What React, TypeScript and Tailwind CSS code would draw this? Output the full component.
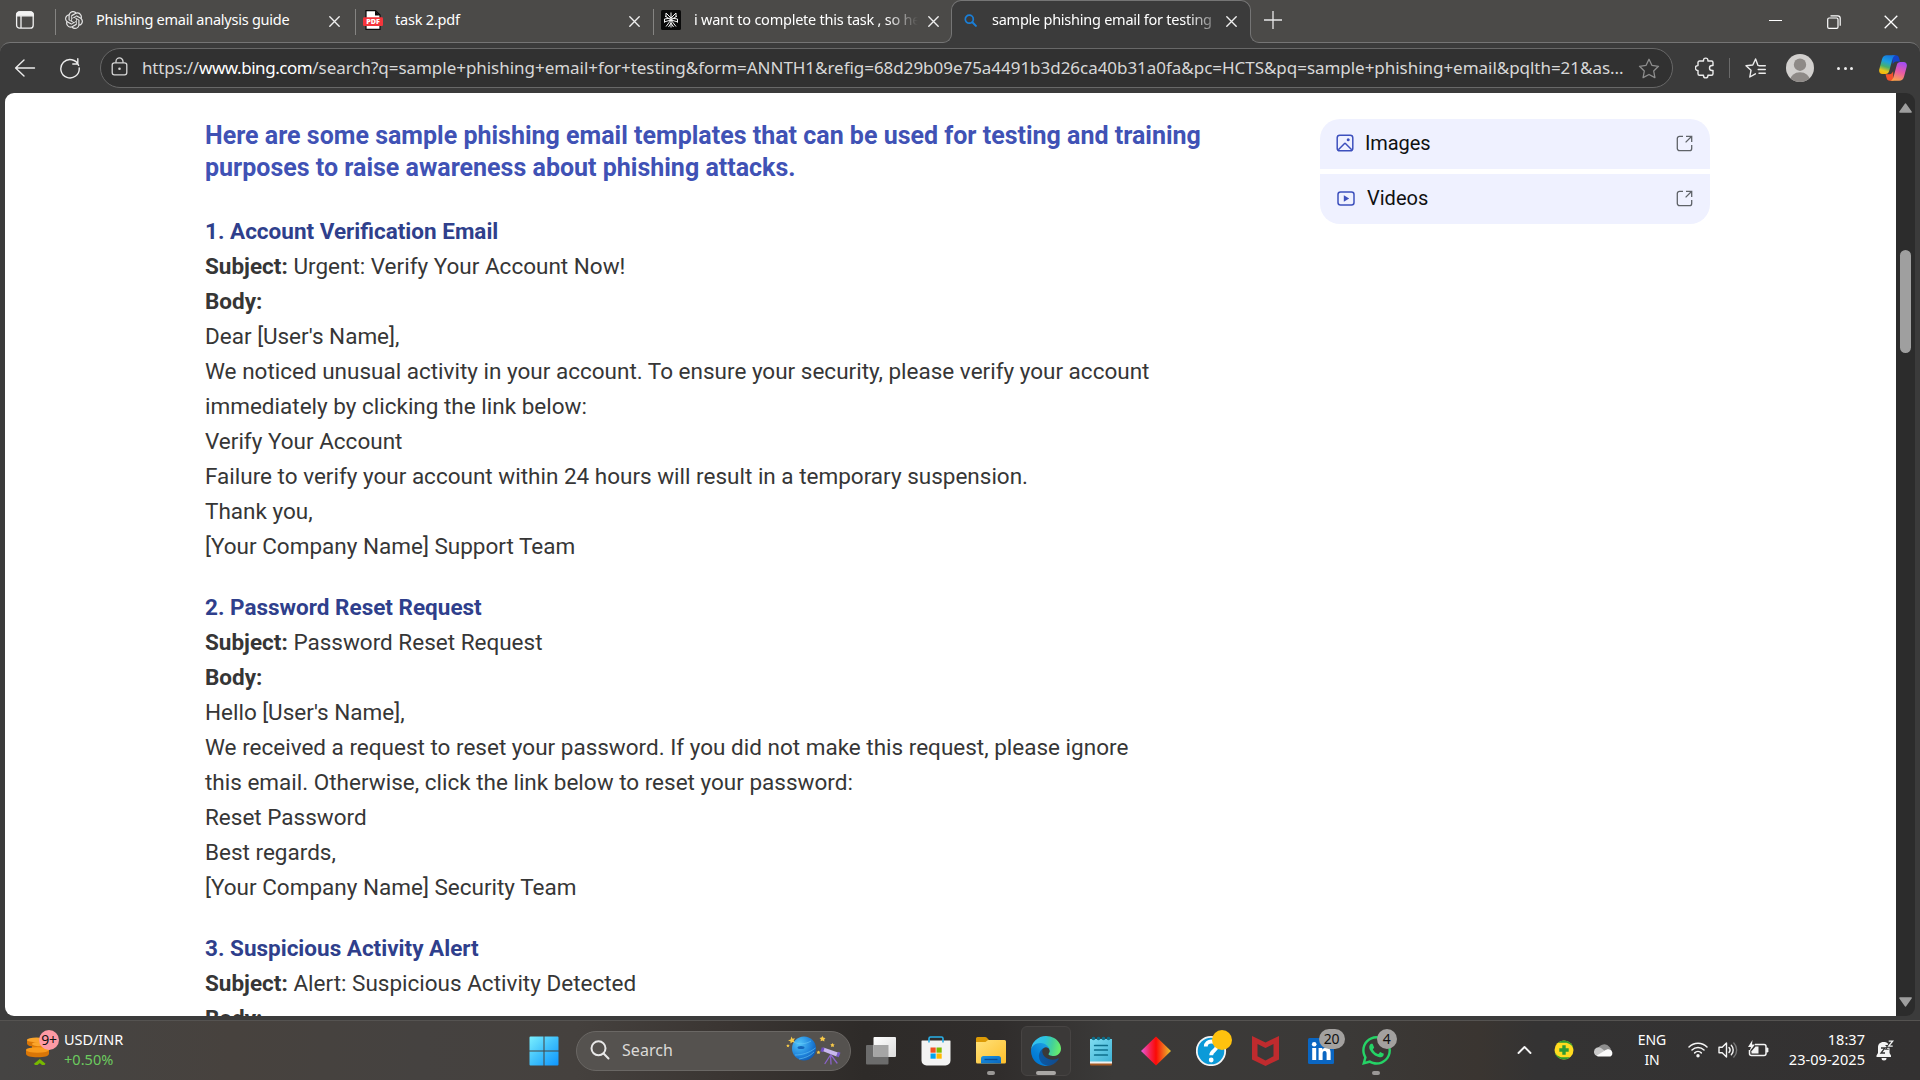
import React from "react";
import { SiOpenai } from "react-icons/si";
import { FaWhatsapp } from "react-icons/fa";

type IconProps = { className?: string };

const ui = "font-['Noto_Sans',sans-serif]";

/* ---------- Browser icons ---------- */

function TabActionsIcon() {
  return (
    <svg width="20" height="20" viewBox="0 0 20 20" fill="none" stroke="#f2f2f2" strokeWidth="1.3">
      <rect x="1.6" y="1.8" width="16.6" height="16.4" rx="3" />
      <path d="M1.6 5.8V4.8a3 3 0 0 1 3-3h10.6a3 3 0 0 1 3 3v1z" fill="#f2f2f2" />
      <path d="M6 6v12" />
    </svg>
  );
}

function CloseIcon({ className = "" }: IconProps) {
  return (
    <svg className={className} width="11" height="11" viewBox="0 0 11 11" stroke="#f0f0f0" strokeWidth="1.35" strokeLinecap="round">
      <path d="M.8.8l9.4 9.4M10.2.8L.8 10.2" />
    </svg>
  );
}

function PdfIcon() {
  return (
    <svg width="20" height="20" viewBox="0 0 20 20">
      <path d="M3 .6h9.500L17 5v14.400H3z" fill="#fff" stroke="#0a0a0a" strokeWidth="1.2" />
      <path d="M12 .5L17 5.500H12z" fill="#0a0a0a" />
      <rect x="0" y="7.300" width="20" height="8.600" rx="1.200" fill="#f5353b" />
      <text x="10" y="14.200" textAnchor="middle" fontFamily="Open Sans, sans-serif" fontWeight="800" fontSize="7.200" fill="#fff">PDF</text>
    </svg>
  );
}

function PerplexityIcon() {
  return (
    <svg width="20" height="20" viewBox="0 0 20 20" fill="none" stroke="#f5f5f5" strokeWidth="1">
      <rect width="20" height="20" rx="1.500" fill="#0a0a0a" stroke="none" />
      <path d="M10 2.500v15M5 3l5 5 5-5M10 8l-6.500 1M10 8l6.500 1M4 6l6 4 6-4M3 12l7-2 7 2M10 10l-5 6.500M10 10l5 6.500M10 13l-2.500 4M10 13l2.500 4M3.500 9v3.500M16.500 9v3.500M5 3v4M15 3v4" />
    </svg>
  );
}

function BingSearchIcon() {
  return (
    <svg width="13" height="13" viewBox="0 0 13 13" fill="none" stroke="#1a7fd8" strokeLinecap="round">
      <circle cx="5.300" cy="5.200" r="4" strokeWidth="1.700" />
      <path d="M8.400 8.300l3.500 3.600" strokeWidth="2" />
    </svg>
  );
}

function BackIcon() {
  return (
    <svg width="22" height="20" viewBox="0 0 22 20" fill="none" stroke="#ececec" strokeWidth="1.400" strokeLinecap="round" strokeLinejoin="round">
      <path d="M10 2L1.600 10 10 18M2 10h18.500" />
    </svg>
  );
}

function ReloadIcon() {
  return (
    <svg width="22" height="22" viewBox="0 0 22 22" fill="none" stroke="#ececec" strokeWidth="1.400" strokeLinecap="round" strokeLinejoin="round">
      <path d="M19.600 8.400A9.200 9.200 0 1 0 20.200 11M18.800 1.800v5.200h-5" />
    </svg>
  );
}

function LockIcon() {
  return (
    <svg width="17" height="19" viewBox="0 0 17 19" fill="none" stroke="#d6d6d6" strokeWidth="1.300">
      <rect x="1.200" y="5.800" width="14.600" height="12" rx="2.200" />
      <path d="M5 5.800V4.400a3.500 3.500 0 0 1 7 0v1.400" />
      <circle cx="8.500" cy="11.800" r="1.300" fill="#d6d6d6" stroke="none" />
    </svg>
  );
}

function StarIcon() {
  return (
    <svg width="22" height="21" viewBox="0 0 22 21" fill="none" stroke="#8e8e8e" strokeWidth="1.300" strokeLinejoin="round">
      <path d="M11 1.300l2.900 6 6.600 1-4.800 4.700 1.200 6.600-5.900-3.100-5.900 3.100 1.200-6.600L1.500 8.300l6.600-1z" />
    </svg>
  );
}

function PuzzleIcon() {
  return (
    <svg width="20" height="22" viewBox="0 0 20 22" fill="none" stroke="#ececec" strokeWidth="1.400" strokeLinejoin="round">
      <path d="M4.500 4h4V3.300a2.200 2.200 0 0 1 4.400 0V4h3.600a1.500 1.500 0 0 1 1.500 1.500v3h-1a2.500 2.500 0 0 0 0 5h1v3.200a1.500 1.500 0 0 1-1.500 1.500h-3.600v.5a2.200 2.200 0 0 1-4.400 0v-.5h-4A1.500 1.500 0 0 1 3 16.700v-3.300h-.200a2.400 2.400 0 0 1 0-4.800H3V5.500A1.500 1.500 0 0 1 4.500 4z" />
    </svg>
  );
}

function FavoritesIcon() {
  return (
    <svg width="21" height="20" viewBox="0 0 21 20" fill="none" stroke="#ececec" strokeWidth="1.400" strokeLinecap="round" strokeLinejoin="round">
      <path d="M13 7.400L10.600 1 7.800 7 1 7.700l5 4.600L4.800 19l5.600-3.200M14 7.700h6.300M13.200 11.500h7.100M14 15.300h6.300" />
    </svg>
  );
}

function AvatarIcon() {
  return (
    <svg width="28" height="28" viewBox="0 0 28 28">
      <defs>
        <clipPath id="avatar"><circle cx="14" cy="14" r="14" /></clipPath>
      </defs>
      <g clipPath="url(#avatar)">
        <rect width="28" height="28" fill="#d2d0ce" />
        <circle cx="14" cy="10.700" r="6.200" fill="#8e8a87" />
        <ellipse cx="14" cy="26.500" rx="10" ry="8.300" fill="#8e8a87" />
      </g>
    </svg>
  );
}

function CopilotIcon() {
  return (
    <svg width="28" height="26" viewBox="0 0 28 26">
      <defs>
        <linearGradient id="cpA" x1="0.600" y1="0" x2="0.300" y2="1">
          <stop offset="0" stopColor="#1579e0" />
          <stop offset=".35" stopColor="#1c9fe0" />
          <stop offset=".62" stopColor="#48b06a" />
          <stop offset=".85" stopColor="#e8c51c" />
          <stop offset="1" stopColor="#f6b50a" />
        </linearGradient>
        <linearGradient id="cpB" x1="0.600" y1="0" x2="0.300" y2="1">
          <stop offset="0" stopColor="#a54df0" />
          <stop offset=".5" stopColor="#ea5ba4" />
          <stop offset="1" stopColor="#fba54a" />
        </linearGradient>
      </defs>
      <path d="M13 .3h3.800c2 0 2.800 1.200 3.400 3.200l.9 3h-3.500c-2 0-3.200 1.200-3.800 3z" fill="#1443c8" />
      <path d="M14.500 25.700h-3.600c-2 0-2.900-1.200-3.400-3l-1-3.500h4c2 0 3-1.200 3.600-3.200z" fill="#f4512c" />
      <path d="M7.800.3h9c-2 .4-2.800 2-3.500 4.500L10.200 16c-.6 2-1.800 2.900-3.600 2.900H3.400C.8 18.900-.3 16.900.3 14.300L3 4.300C3.700 1.700 5.300.3 7.800.3z" fill="url(#cpA)" />
      <path d="M20.200 25.700h-9c2-.4 2.800-2 3.500-4.500L17.800 10c.6-2 1.800-2.900 3.600-2.900h3.200c2.600 0 3.700 2 3.100 4.600l-2.700 10c-.7 2.600-2.300 4-4.800 4z" fill="url(#cpB)" />
    </svg>
  );
}

/* ---------- Page icons ---------- */

function ImageIcon() {
  return (
    <svg width="18" height="18" viewBox="0 0 18 18" fill="none" stroke="#3d50bd" strokeWidth="1.500" strokeLinejoin="round">
      <rect x="1.200" y="1.200" width="15.600" height="15.600" rx="2.600" />
      <circle cx="12.200" cy="5.700" r="1.500" fill="#3d50bd" stroke="none" />
      <path d="M2.300 15.800l6-6.100a1 1 0 0 1 1.400 0l6 6.100" />
    </svg>
  );
}

function VideoIcon() {
  return (
    <svg width="18" height="15" viewBox="0 0 18 15" fill="none" stroke="#3d50bd" strokeWidth="1.500">
      <rect x="1" y="1" width="16" height="13" rx="2.500" />
      <path d="M6.800 4.300v6.400l5.400-3.200z" fill="#3d50bd" stroke="none" />
    </svg>
  );
}

function ExternalIcon() {
  return (
    <svg width="17" height="17" viewBox="0 0 17 17" fill="none" stroke="#5f6368" strokeWidth="1.300">
      <path d="M7 1.300H3.500A2.200 2.200 0 0 0 1.300 3.500v10a2.200 2.200 0 0 0 2.200 2.200h10a2.200 2.200 0 0 0 2.200-2.200V10M10 1.300h5.700V7M15.500 1.500L9.600 7.400" />
    </svg>
  );
}

/* ---------- Browser chrome ---------- */

function TabDivider() {
  return <div className="absolute left-0 top-[9px] h-[26px] w-px bg-[#858482]" />;
}

function TabStrip() {
  return (
    <div className="flex h-[42px] shrink-0 items-center bg-[#4b4a48]">
      <div className="flex w-[55px] shrink-0 items-center pl-[15px] pb-[3px]">
        <TabActionsIcon />
      </div>
      <div className="relative flex h-full w-[300px] shrink-0 items-center pl-[9.500px]">
        <TabDivider />
        <SiOpenai size={18} color="#e4e4e4" className="-mt-0.5 shrink-0" />
        <div className="mt-[-5px] ml-[13.500px] w-[224px] shrink-0 whitespace-nowrap text-[14.5px] leading-6 tracking-[-0.24px] text-white">Phishing email analysis guide</div>
        <CloseIcon className="ml-[9px] shrink-0" />
      </div>
      <div className="relative flex h-full w-[298px] shrink-0 items-center pl-[8px]">
        <TabDivider />
        <div className="-mt-0.5 shrink-0"><PdfIcon /></div>
        <div className="mt-[-5px] ml-3 w-[224px] shrink-0 whitespace-nowrap text-[14.5px] leading-6 tracking-[-0.2px] text-white">task 2.pdf</div>
        <CloseIcon className="ml-[10px] shrink-0" />
      </div>
      <div className="relative flex h-full w-[298px] shrink-0 items-center pl-[8px]">
        <TabDivider />
        <div className="-mt-0.5 shrink-0"><PerplexityIcon /></div>
        <div className="mt-[-5px] ml-[13px] w-[224px] shrink-0 overflow-hidden whitespace-nowrap text-[14.5px] leading-6 tracking-[-0.24px] text-white [mask-image:linear-gradient(90deg,#000_86%,transparent)]">
          i want to complete this task , so help
        </div>
        <CloseIcon className="ml-[10px] shrink-0" />
      </div>
      <div className="relative z-10 mb-[-1px] flex h-[43px] w-[300px] shrink-0 items-center rounded-t-[10px] border-x border-t border-[#757575] bg-[#3b3b3b] pl-[12px]">
        <div className="absolute bottom-0 left-[-9px] size-[9px] bg-[#3b3b3b]">
          <div className="size-full rounded-br-[9px] border-b border-r border-[#757575] bg-[#4b4a48]" />
        </div>
        <div className="absolute bottom-0 right-[-9px] size-[9px] bg-[#3b3b3b]">
          <div className="size-full rounded-bl-[9px] border-b border-l border-[#757575] bg-[#4b4a48]" />
        </div>
        <div className="-mt-[4px] shrink-0"><BingSearchIcon /></div>
        <div className="mt-[-6px] ml-[15px] w-[221px] shrink-0 overflow-hidden whitespace-nowrap text-[14.5px] leading-6 tracking-[-0.25px] text-white [mask-image:linear-gradient(90deg,#000_88%,#0005)]">
          sample phishing email for testing
        </div>
        <CloseIcon className="ml-[13px] shrink-0 -mt-px" />
      </div>
      <svg className="ml-[13px] mb-[3px] shrink-0" width="18" height="18" viewBox="0 0 18 18" stroke="#e8e8e8" strokeWidth="1.300">
        <path d="M9 0v18M0 9h18" />
      </svg>
      <div className="ml-auto flex items-center pr-[22px] pt-px">
        <div className="mb-[2px] h-px w-[13px] bg-white" />
        <svg className="ml-[45px]" width="14" height="14" viewBox="0 0 14 14" fill="none" stroke="#fff" strokeWidth="1.200">
          <rect x=".7" y="3" width="10.300" height="10.300" rx="1.400" />
          <path d="M3.500.8h7.300a2.400 2.400 0 0 1 2.400 2.400v7.600" />
        </svg>
        <svg className="ml-[43px]" width="14" height="14" viewBox="0 0 14 14" stroke="#fff" strokeWidth="1.300">
          <path d="M.7.7l12.600 12.600M13.300.7L.7 13.300" />
        </svg>
      </div>
    </div>
  );
}

function Toolbar() {
  return (
    <div className="h-[51px] shrink-0 bg-[#4b4a48]">
      <div className="flex h-full items-center rounded-t-[10px] border-t border-[#757575] bg-[#3b3b3b]">
        <div className="ml-[14px] shrink-0"><BackIcon /></div>
        <div className="ml-[23px] shrink-0"><ReloadIcon /></div>
        <div className="ml-[19px] flex h-10 w-[1573px] shrink-0 items-center rounded-full border border-[#686868] bg-[#313131]">
          <div className="ml-[10px] mb-[3px] shrink-0"><LockIcon /></div>
          <div className="ml-[14px] w-[1490px] shrink-0 whitespace-nowrap text-[17px] leading-6 tracking-[-0.035px] text-[#d8d8d8]">
            <span className="tracking-[-0.2px]">https://</span>
            <span className="tracking-[-0.45px] text-white">www.bing.com</span>
            <span>/search?q=sample+phishing+email+for+testing&amp;form=ANNTH1&amp;refig=68d29b09e75a4491b3d26ca40b31a0fa&amp;pc=HCTS&amp;pq=sample+phishing+email&amp;pqlth=21&amp;as...</span>
          </div>
          <div className="ml-[6px] shrink-0"><StarIcon /></div>
        </div>
        <div className="ml-[21.500px] shrink-0"><PuzzleIcon /></div>
        <div className="ml-[14.500px] h-5 w-px bg-[#6a6a6a]" />
        <div className="ml-[15px] shrink-0"><FavoritesIcon /></div>
        <div className="ml-[20px] shrink-0"><AvatarIcon /></div>
        <div className="ml-[23px] flex gap-[3.500px]">
          <div className="size-[3px] rounded-full bg-[#ececec]" />
          <div className="size-[3px] rounded-full bg-[#ececec]" />
          <div className="size-[3px] rounded-full bg-[#ececec]" />
        </div>
        <div className="ml-[26px] shrink-0"><CopilotIcon /></div>
      </div>
    </div>
  );
}

/* ---------- Page ---------- */

const templates = [
  {
    title: "1. Account Verification Email",
    subject: "Urgent: Verify Your Account Now!",
    lines: [
      "Dear [User's Name],",
      "We noticed unusual activity in your account. To ensure your security, please verify your account",
      "immediately by clicking the link below:",
      "Verify Your Account",
      "Failure to verify your account within 24 hours will result in a temporary suspension.",
      "Thank you,",
      "[Your Company Name] Support Team",
    ],
  },
  {
    title: "2. Password Reset Request",
    subject: "Password Reset Request",
    lines: [
      "Hello [User's Name],",
      "We received a request to reset your password. If you did not make this request, please ignore",
      "this email. Otherwise, click the link below to reset your password:",
      "Reset Password",
      "Best regards,",
      "[Your Company Name] Security Team",
    ],
  },
  { title: "3. Suspicious Activity Alert", subject: "Alert: Suspicious Activity Detected", lines: [] },
];

function Article() {
  return (
    <main className="mt-px w-[1115px] shrink-0 whitespace-nowrap text-[22.5px] leading-[35px] text-[#363636]">
      <h1 className="text-[25px] font-bold leading-8 text-[#4052b5]">
        Here are some sample phishing email templates that can be used for testing and training
        <br />
        purposes to raise awareness about phishing attacks.
      </h1>
      <div className="mt-[30px] flex flex-col gap-[26px]">
        {templates.map((t) => (
          <section key={t.title}>
            <h2 className="font-bold text-[#2f3f8c]">{t.title}</h2>
            <p><b className="font-bold">Subject:</b> {t.subject}</p>
            <p><b className="font-bold">Body:</b></p>
            {t.lines.map((line) => <p key={line}>{line}</p>)}
          </section>
        ))}
      </div>
    </main>
  );
}

function SideLinks() {
  return (
    <aside className="flex h-fit w-[390px] flex-col gap-[5px] overflow-hidden rounded-[20px] text-[20px] text-[#111]">
      <div className="flex h-[50px] items-center bg-[#eff1ff] pb-[2px] pl-4 pr-[17px]">
        <ImageIcon />
        <span className="ml-[11px] tracking-[-0.1px]">Images</span>
        <div className="ml-auto"><ExternalIcon /></div>
      </div>
      <div className="flex h-[50px] items-center bg-[#eff1ff] pb-[2px] pl-[17px] pr-[17px]">
        <VideoIcon />
        <span className="ml-[12px]">Videos</span>
        <div className="ml-auto"><ExternalIcon /></div>
      </div>
    </aside>
  );
}

function Scrollbar() {
  return (
    <div className="flex w-[19px] shrink-0 flex-col items-center rounded-r-[9px] bg-[#2c2c2c]">
      <svg className="mt-[10px]" width="13" height="10" viewBox="0 0 13 10"><path d="M6.500 1.200L12 9H1z" fill="#9f9f9f" stroke="#9f9f9f" strokeWidth="1.600" strokeLinejoin="round" /></svg>
      <div className="mt-[137px] h-[103px] w-[11px] rounded-full bg-[#9f9f9f]" />
      <svg className="mt-auto mb-[9px]" width="13" height="10" viewBox="0 0 13 10"><path d="M6.500 8.800L12 1H1z" fill="#9f9f9f" stroke="#9f9f9f" strokeWidth="1.600" strokeLinejoin="round" /></svg>
    </div>
  );
}

/* ---------- Taskbar icons ---------- */

function CoinsIcon() {
  return (
    <svg width="26" height="34" viewBox="0 0 26 34">
      <g fill="#d97607">
        <path d="M0 18.500v4.200C0 25 5 26.300 11.500 26.300S23 25 23 22.700v-4.200z" />
        <path d="M6 12.500v4c0 2 4 3.300 9.500 3.300s9.500-1.300 9.500-3.300v-4z" fill="#e5830a" />
        <path d="M1 8.500v4c0 2 4 3.300 10 3.300s9-1.300 9-3.300v-4z" />
      </g>
      <ellipse cx="11.500" cy="19" rx="11.500" ry="2.700" fill="#f99b1c" />
      <ellipse cx="15.500" cy="13" rx="9.500" ry="2.300" fill="#fba52b" />
      <ellipse cx="10.500" cy="8.900" rx="9.500" ry="2.300" fill="#fba52b" />
      <path d="M9 34l4.800-4 4.700 4" fill="none" stroke="#77b800" strokeWidth="3.200" />
    </svg>
  );
}

function WindowsIcon() {
  return (
    <svg width="30" height="30" viewBox="0 0 30 30">
      <defs>
        <linearGradient id="win" gradientUnits="userSpaceOnUse" x1="0" y1="0" x2="30" y2="30">
          <stop offset="0" stopColor="#7cf1ff" />
          <stop offset=".5" stopColor="#3fc0fb" />
          <stop offset="1" stopColor="#0c94ff" />
        </linearGradient>
      </defs>
      <path fill="url(#win)" d="M1.500.5H14.500v14H.5v-13a1 1 0 0 1 1-1zM15.500.5h13a1 1 0 0 1 1 1v13h-14zM.5 15.500h14v14h-13a1 1 0 0 1-1-1zM15.500 15.500h14v13a1 1 0 0 1-1 1h-13z" />
    </svg>
  );
}

function SearchArt() {
  return (
    <svg width="56" height="30" viewBox="0 0 56 30">
      <defs>
        <radialGradient id="planet" cx=".3" cy=".3" r=".85">
          <stop offset="0" stopColor="#52c4f8" />
          <stop offset=".6" stopColor="#1f83dc" />
          <stop offset="1" stopColor="#0b4fa8" />
        </radialGradient>
      </defs>
      <circle cx="18" cy="13.500" r="12" fill="url(#planet)" />
      <g fill="none" stroke="#6fd0fa" strokeWidth=".9" opacity=".6">
        <path d="M8 7c5 3 12 2 17-1M9 20c7 0 14-2 20.500-7M13 24c6-1 11-3 15-7" />
      </g>
      <ellipse cx="15" cy="12.500" rx="3.500" ry="1.600" fill="#1466bb" />
      <g fill="#f7c948">
        <path d="M5.500 1.500l1 2.200 2.400-.5-1.200 2.200 1 2-2.300-.3-1.800 1.500-.2-2.300L2 5.500l2.600-1z" />
        <path d="M36.500 1l1 1.700 2 .2-1.300 1.500.2 2-1.900-.8-1.900.7.300-2L33.500 2.900l2-.3zM46.500 8l.7 1.200 1.500.3-1 1 .2 1.500-1.400-.6-1.400.5.2-1.500-1-1 1.500-.3zM32.500 15.500l.6 1 1.400.3-1 1 .2 1.300-1.200-.6-1.300.5.2-1.300-.9-1 1.400-.3zM2 9l.5 1 1.200.3-.9.8.2 1.200-1-.5-1.200.5.300-1.300L.200 10.200 1.500 10z" />
      </g>
      <g stroke="#8a63c9" strokeWidth="1.300" strokeLinecap="round" fill="none">
        <path d="M44.500 20l-5.500 8.500M44.500 20l.5 9M45 20l6 8" />
      </g>
      <path d="M37.500 12.500l14.500 5-1.500 4-14-5.500z" fill="#c9b8ee" />
      <path d="M35.800 12.300l2.700.9-1.500 4-2.500-1z" fill="#6f4fc1" />
      <path d="M52 16.800l2.500.9-1.800 4.600-2.500-1z" fill="#7b5bcb" />
    </svg>
  );
}

function TaskViewIcon() {
  return (
    <svg width="30" height="28" viewBox="0 0 30 28">
      <defs>
        <linearGradient id="tv" x1="0" y1="0" x2="1" y2="1"><stop offset="0" stopColor="#fff" /><stop offset="1" stopColor="#dcdcdc" /></linearGradient>
      </defs>
      <rect x="0" y="8" width="22.500" height="19.500" rx="1" fill="#6c6c6c" />
      <rect x="7.500" y="0" width="22.500" height="20" rx="1" fill="url(#tv)" />
      <rect x="7.500" y="8" width="15" height="12" fill="#a5a5a5" />
    </svg>
  );
}

function StoreIcon() {
  return (
    <svg width="30" height="30" viewBox="0 0 30 30">
      <path d="M1 4.500h28a.5.500 0 0 1 .5.500v19.500a5 5 0 0 1-5 5h-19a5 5 0 0 1-5-5V5A.5.500 0 0 1 1 4.500z" fill="#f3f3f3" />
      <path d="M8 6.500V2.500a1.500 1.500 0 0 1 1.500-1.500h11A1.500 1.500 0 0 1 22 2.500v4" fill="none" stroke="#29b0e8" strokeWidth="1.600" />
      <rect x="9.500" y="11.500" width="5.200" height="5.200" fill="#f25022" />
      <rect x="15.500" y="11.500" width="5.200" height="5.200" fill="#7fba00" />
      <rect x="9.500" y="17.500" width="5.200" height="5.200" fill="#00a4ef" />
      <rect x="15.500" y="17.500" width="5.200" height="5.200" fill="#ffb900" />
    </svg>
  );
}

function FolderIcon() {
  return (
    <svg width="30" height="27" viewBox="0 0 30 27">
      <defs>
        <linearGradient id="fold" x1="0" y1="0" x2="1" y2="1"><stop offset="0" stopColor="#ffe17a" /><stop offset="1" stopColor="#fdbf2b" /></linearGradient>
        <linearGradient id="foldB" x1="0" y1="0" x2="1" y2="1"><stop offset="0" stopColor="#1a93e2" /><stop offset="1" stopColor="#0a66be" /></linearGradient>
      </defs>
      <path d="M0 1.500A1.500 1.500 0 0 1 1.500 0h7.700a2 2 0 0 1 1.400.6L13 3v5H0z" fill="#dc9a06" />
      <path d="M0 5h9.500l2.500-2h16.500A1.500 1.500 0 0 1 30 4.500v20.500a1.500 1.500 0 0 1-1.500 1.500h-27A1.500 1.500 0 0 1 0 25z" fill="url(#fold)" />
      <path d="M5 26.500v-5A2.500 2.500 0 0 1 7.500 19h15a2.500 2.500 0 0 1 2.500 2.500v5z" fill="url(#foldB)" />
      <path d="M8.500 22.500h13" stroke="#0a4c94" strokeWidth="1.300" />
    </svg>
  );
}

function EdgeIcon() {
  return (
    <svg width="30" height="30" viewBox="0 0 256 256">
      <defs>
        <linearGradient id="e1" gradientUnits="userSpaceOnUse" x1="63" y1="178" x2="241" y2="178"><stop offset="0" stopColor="#0c59a4" /><stop offset="1" stopColor="#114a8b" /></linearGradient>
        <linearGradient id="e2" gradientUnits="userSpaceOnUse" x1="157" y1="100" x2="46" y2="222"><stop offset="0" stopColor="#1b9de2" /><stop offset=".2" stopColor="#1595df" /><stop offset=".67" stopColor="#0680d7" /><stop offset="1" stopColor="#0078d4" /></linearGradient>
        <linearGradient id="e3" gradientUnits="userSpaceOnUse" x1="20" y1="60" x2="240" y2="110"><stop offset="0" stopColor="#35c1f1" /><stop offset=".4" stopColor="#2cc3e0" /><stop offset=".7" stopColor="#43d09b" /><stop offset="1" stopColor="#66eb6e" /></linearGradient>
      </defs>
      <path fill="url(#e1)" d="M231 190.500a93.700 93.700 0 0 1-10.500 4.700 101.900 101.900 0 0 1-35.900 6.500c-47.300 0-88.500-32.500-88.500-74.300a31.500 31.500 0 0 1 16.400-27.300c-42.800 1.800-53.800 46.400-53.800 72.500 0 73.900 68.100 81.400 82.800 81.400 7.900 0 19.800-2.300 27-4.600l1.300-.4a128.300 128.300 0 0 0 66.600-52.800 4 4 0 0 0-5.400-5.700z" />
      <path fill="url(#e2)" d="M105.700 241.400a79.200 79.200 0 0 1-22.700-21.300 80.700 80.700 0 0 1 29.500-120c3.100-1.500 8.500-4.100 15.600-4a32.400 32.400 0 0 1 25.700 13 31.900 31.900 0 0 1 6.300 18.700c0-.2 24.500-79.600-80-79.600-43.900 0-80 41.700-80 78.200a130.200 130.200 0 0 0 12.100 56 128 128 0 0 0 156.400 67 75.500 75.500 0 0 1-62.800-8z" />
      <path fill="url(#e3)" d="M152.300 148.900c-.8 1-3.300 2.500-3.300 5.700 0 2.600 1.700 5.100 4.700 7.200 14.400 10 41.500 8.700 41.600 8.700a59.600 59.600 0 0 0 30.300-8.300 61.400 61.400 0 0 0 30.400-52.900c.3-22.400-8-37.300-11.300-43.900C223.500 23.900 177.700 0 128 0A128 128 0 0 0 0 126.200c.5-36.500 36.800-66 80-66 3.500 0 23.500.3 42 10a72.600 72.600 0 0 1 30.900 29.300c6.100 10.600 7.200 24.100 7.200 29.500s-2.700 13.300-7.800 19.900z" />
    </svg>
  );
}

function NotepadIcon() {
  return (
    <svg width="22" height="30" viewBox="0 0 22 30">
      <defs><linearGradient id="np" x1="0" y1="0" x2="1" y2="1"><stop offset="0" stopColor="#7fdcf0" /><stop offset="1" stopColor="#3fb3d6" /></linearGradient></defs>
      <rect x="0" y="26" width="22" height="3.500" rx="1" fill="#a55a24" />
      <rect x="0" y="23" width="22" height="4.500" fill="#f0f0f0" />
      <path d="M0 3h22v22.500H0z" fill="url(#np)" />
      <g stroke="#0d6f8c" strokeWidth="1.700" strokeLinecap="round"><path d="M4.700 9.500h12.600M4.700 14h12.600M4.700 19h12.600" /></g>
      <g fill="#0f6d88"><circle cx="3.500" cy="2.500" r="1.800" /><circle cx="8.500" cy="2.500" r="1.800" /><circle cx="13.500" cy="2.500" r="1.800" /><circle cx="18.500" cy="2.500" r="1.800" /></g>
    </svg>
  );
}

function DiamondIcon() {
  return (
    <svg width="30" height="30" viewBox="0 0 30 30">
      <defs><linearGradient id="dia"><stop offset="0" stopColor="#e55be0" /><stop offset=".3" stopColor="#f4224f" /><stop offset=".5" stopColor="#fb0a06" /><stop offset=".75" stopColor="#f26a1c" /><stop offset="1" stopColor="#e8c62c" /></linearGradient></defs>
      <path d="M15 .5L30 15 15 29.500 0 15z" fill="url(#dia)" />
    </svg>
  );
}

function HelpIcon() {
  return (
    <svg width="36" height="36" viewBox="0 0 36 36">
      <circle cx="15" cy="21" r="14.200" fill="#0c9ad8" stroke="#f4f4f4" strokeWidth="1.800" />
      <path d="M9.800 16.500c0-3.500 2.600-5 5.400-5s5.600 1.600 5.600 5c0 4-5.600 4-5.600 8.700" fill="none" stroke="#fff" strokeWidth="3.800" />
      <circle cx="15.200" cy="30" r="2.400" fill="#fff" />
      <circle cx="26" cy="10" r="10" fill="#ffc20e" />
    </svg>
  );
}

function ShieldMIcon() {
  return (
    <svg width="27" height="30" viewBox="0 0 27 30">
      <path d="M0 0l13.500 6.500L27 0v23.500L13.500 30 0 23.500z" fill="#c02b2e" />
      <path d="M5.500 8l8 4 8-4v12.200l-8 4.200-8-4.200z" fill="#3a3938" />
    </svg>
  );
}

function LinkedinIcon() {
  return (
    <svg width="26" height="26" viewBox="0 0 26 26">
      <rect width="26" height="26" rx="1.500" fill="#0a66c2" />
      <circle cx="6.200" cy="6.200" r="2.300" fill="#fff" />
      <path d="M4.200 10h4v12h-4zM10.600 10h3.700v1.700c.6-1.100 2-2 3.900-2 3.500 0 4.400 2.200 4.400 5.400V22h-4v-6.200c0-1.500-.2-2.900-1.900-2.900s-2.100 1.300-2.100 2.800V22h-4z" fill="#fff" />
    </svg>
  );
}

function Badge({ text, className }: { text: string; className: string }) {
  return (
    <div className={`absolute flex h-5 items-center justify-center rounded-full text-[14px] leading-5 text-[#111] ${className}`}>
      <span className="tracking-[-0.3px]">{text}</span>
    </div>
  );
}

function AppSlot({ children, indicator, active = false }: { children: React.ReactNode; indicator?: "dot" | "bar"; active?: boolean }) {
  return (
    <div className="flex h-full w-[55px] shrink-0 items-center justify-center">
      <div className={`relative flex size-[50px] items-center justify-center rounded-md ${active ? "border border-[#474443] bg-[#3b3938]" : ""}`}>
        {children}
        {indicator === "dot" && <div className="absolute bottom-[1px] h-1 w-2 rounded-full bg-[#9a9896]" />}
        {indicator === "bar" && <div className="absolute bottom-0 h-1 w-5 rounded-full bg-[#a9a7a5]" />}
      </div>
    </div>
  );
}

function Tray() {
  return (
    <div className="ml-auto flex items-center text-[14.5px] leading-5 text-white">
      <svg className="-mt-px" width="15" height="10" viewBox="0 0 15 10" fill="none" stroke="#f4f4f4" strokeWidth="1.900" strokeLinecap="round" strokeLinejoin="round"><path d="M1.500 8l6-6 6 6" /></svg>
      <svg className="-mt-0.5 ml-[22px]" width="20" height="20" viewBox="0 0 20 20">
        <circle cx="10" cy="10" r="9.500" fill="#ffdb1f" />
        <path d="M4 2.700A9.500 9.500 0 0 1 19.500 9c-1-4-5-6.500-9-6.300-2.500 0-4.500 0-6.500 0zM16 17.300A9.500 9.500 0 0 1 .5 11c1 4 4.500 6.300 8.500 6.300z" fill="#2d9a33" />
        <path d="M10 5.300v9.400M5.300 10h9.400" stroke="#2d9a33" strokeWidth="3.400" />
      </svg>
      <svg className="-mt-0.5 ml-[20px]" width="20" height="14" viewBox="0 0 20 14">
        <path d="M4 9.500A6.500 6.500 0 0 1 15.500 4 5 5 0 0 1 17 8z" fill="#8e8e8e" />
        <path d="M0 8.500A4.500 4.500 0 0 1 7 5l4 3-5 5H4a4 4 0 0 1-4-4.500z" fill="#c9c9c9" />
        <path d="M2.500 12.800L10.500 7.800c2-1.300 3-1.800 5-1.300A3.800 3.800 0 0 1 16.500 13.500H4z" fill="#fbfbfb" />
      </svg>
      <div className="ml-[23px] -mt-px w-[30px] text-center text-[14px] tracking-[-0.1px]">ENG<br />IN</div>
      <svg className="-mt-0.5 ml-[21px]" width="20" height="17" viewBox="0 0 20 17" fill="none" stroke="#f4f4f4" strokeWidth="1.500" strokeLinecap="round">
        <path d="M1 6a12.500 12.500 0 0 1 18 0M4 9a8.500 8.500 0 0 1 12 0M6.700 11.900a4.700 4.700 0 0 1 6.600 0" />
        <circle cx="10" cy="14.700" r="1.700" fill="#f4f4f4" stroke="none" />
      </svg>
      <svg className="-mt-0.5 ml-[10px]" width="20" height="18" viewBox="0 0 20 18" fill="none" stroke="#f4f4f4" strokeWidth="1.400" strokeLinecap="round" strokeLinejoin="round">
        <path d="M1 6.300h3.200L8.500 2v14l-4.300-4.300H1z" />
        <path d="M11 6.500a3.700 3.700 0 0 1 0 5M13.300 4.200a7 7 0 0 1 0 9.600" />
        <path d="M15.800 2a10 10 0 0 1 0 14" stroke="#777" />
      </svg>
      <svg className="-mt-1 ml-[10px]" width="21" height="17" viewBox="0 0 21 17">
        <path d="M7 4.500h9a2 2 0 0 1 2 2v7a2 2 0 0 1-2 2H3.500a2 2 0 0 1-2-2V10" fill="none" stroke="#f4f4f4" strokeWidth="1.500" />
        <path d="M18.500 8h1.500v4h-1.500z" fill="#f4f4f4" stroke="#f4f4f4" strokeWidth=".8" />
        <path d="M7.500 6.500h3v7h-7v-2.200z" fill="#f4f4f4" />
        <path d="M4.500 0L0 7h3L1.500 11.500 7 4.500H4z" fill="#f4f4f4" />
      </svg>
      <div className="-mt-[3px] ml-[14px] w-[82px] text-right tracking-[0.05px]">18:37<br />23-09-2025</div>
      <svg className="-mt-px ml-[11px]" width="18" height="21" viewBox="0 0 18 21">
        <path d="M7.500 2C4 2 2 4.300 2 7.500V13L.5 15.500V17h14.500v-1.500L13.500 13V7C13.500 4 11 2 7.500 2z" fill="#f4f4f4" />
        <path d="M5.500 18h5a2.500 2.500 0 0 1-5 0z" fill="#f4f4f4" />
        <path d="M5 8h4l-4 5h4" fill="none" stroke="#333" strokeWidth="1.300" />
        <path d="M9.500 5.500h2.700l-2.500 3.800h3" fill="none" stroke="#333" strokeWidth="1.100" />
        <path d="M12.700 1.200h4l-4 5h4" fill="none" stroke="#333" strokeWidth="3.200" />
        <path d="M12.700 1.200h4l-4 5h4" fill="none" stroke="#f4f4f4" strokeWidth="1.300" />
      </svg>
    </div>
  );
}

function Taskbar() {
  return (
    <div className="flex h-[60px] shrink-0 items-center border-t border-[#555351] bg-[linear-gradient(90deg,#454443_0%,#47423e_12%,#454240_22%,#45413e_30%,#3a3532_38%,#2e2b29_45%,#302d2c_52%,#3b3a39_58%,#3b3937_70%,#3a3531_77%,#343333_80%,#333131_100%)]">
      <div className="relative ml-[26px] flex w-[490px] shrink-0 items-center">
        <div className="-mt-1.5 shrink-0"><CoinsIcon /></div>
        <Badge text="9+" className="left-[13px] top-[-2px] w-5 bg-[#fd9aa4]" />
        <div className="ml-3 -mt-[3px] text-[14.5px] leading-5">
          <div className="tracking-[-0.05px] text-white">USD/INR</div>
          <div className="tracking-[0.05px] text-[#6ccb5f]">+0.50%</div>
        </div>
      </div>
      <AppSlot><WindowsIcon /></AppSlot>
      <div className="ml-[5px] mr-[2px] flex h-10 w-[275px] shrink-0 items-center rounded-full border border-[#6a6764] bg-[#55524f]">
        <svg className="-mt-px ml-[13px]" width="20" height="20" viewBox="0 0 20 20" fill="none" stroke="#e8e8e8" strokeWidth="2" strokeLinecap="round">
          <circle cx="8.500" cy="8.300" r="7" />
          <path d="M13.600 13.500l4.900 5" />
        </svg>
        <span className="ml-3 -mt-px w-[155px] text-[16px] tracking-[0.05px] text-[#dcdad8]">Search</span>
        <div className="-mt-px ml-[9px]"><SearchArt /></div>
      </div>
      <AppSlot><TaskViewIcon /></AppSlot>
      <AppSlot><StoreIcon /></AppSlot>
      <AppSlot indicator="dot"><FolderIcon /></AppSlot>
      <AppSlot indicator="bar" active><EdgeIcon /></AppSlot>
      <AppSlot><NotepadIcon /></AppSlot>
      <AppSlot><DiamondIcon /></AppSlot>
      <AppSlot><div className="-mt-1.5 ml-1.5"><HelpIcon /></div></AppSlot>
      <AppSlot><ShieldMIcon /></AppSlot>
      <AppSlot>
        <LinkedinIcon />
        <Badge text="20" className="left-[23px] top-[3px] w-[26px] bg-[#a3a19f]" />
      </AppSlot>
      <AppSlot indicator="dot">
        <div className="ml-px"><FaWhatsapp size={33} color="#25d366" /></div>
        <Badge text="4" className="left-[26px] top-[3px] w-5 bg-[#a3a19f]" />
      </AppSlot>
      <div className="flex flex-1 pr-[26px]"><Tray /></div>
    </div>
  );
}

export default function App() {
  return (
    <div className={`flex h-[1080px] w-[1920px] flex-col overflow-hidden bg-[#3b3b3b] ${ui}`}>
      <TabStrip />
      <Toolbar />
      <div className="mb-[4px] ml-[5px] mr-[5px] flex min-h-0 flex-1 font-['Roboto',sans-serif]">
        <div className="flex flex-1 overflow-hidden rounded-l-[9px] bg-white pl-[200px] pt-[26px]">
          <Article />
          <SideLinks />
        </div>
        <Scrollbar />
      </div>
      <Taskbar />
    </div>
  );
}
